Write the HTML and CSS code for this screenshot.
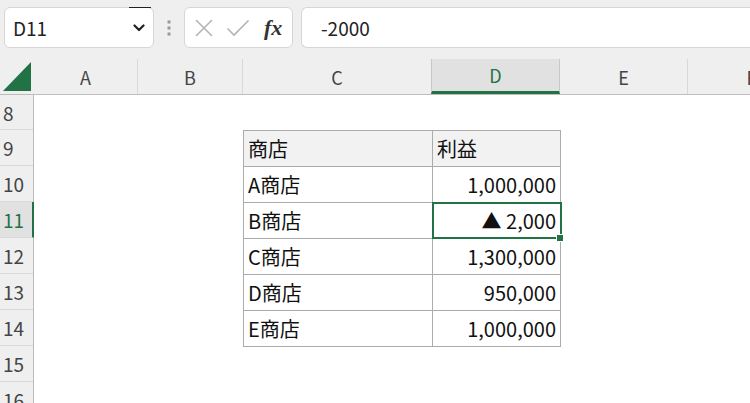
FILE: index.html
```html
<!DOCTYPE html>
<html lang="ja">
<head>
    <meta charset="UTF-8">
    <title>Book1 - Excel</title>
    <link rel="stylesheet" href="styles.css">
</head>
<body>

    <!-- Formula bar -->
    <div class="formula-bar">
        <div class="name-box">
            <span class="name">D11</span>
            <span class="caret-mark"></span>
            <svg class="chevron" width="12" height="8" viewBox="0 0 12 8">
                <path d="M1.5 1.5 L6 6 L10.5 1.5" fill="none" stroke="#222" stroke-width="2.2" stroke-linecap="round" stroke-linejoin="round"/>
            </svg>
        </div>
        <svg class="grip" width="4" height="16" viewBox="0 0 4 16">
            <rect x="0.5" y="0.5" width="3" height="3" fill="#9a9a9a"/>
            <rect x="0.5" y="6.5" width="3" height="3" fill="#9a9a9a"/>
            <rect x="0.5" y="12.5" width="3" height="3" fill="#9a9a9a"/>
        </svg>
        <div class="fx-box">
            <svg width="20" height="20" viewBox="0 0 20 20">
                <path d="M2 2 L18 18 M18 2 L2 18" stroke="#b4b4b4" stroke-width="1.6" fill="none"/>
            </svg>
            <svg width="24" height="20" viewBox="0 0 24 20">
                <path d="M1.5 10.5 L8 17 L22.5 2.5" stroke="#b4b4b4" stroke-width="1.6" fill="none"/>
            </svg>
            <span class="fx">fx</span>
        </div>
        <div class="formula-input">-2000</div>
    </div>

    <!-- Column headers -->
    <div class="col-headers">
        <div class="corner">
            <svg width="28" height="29" viewBox="0 0 28 29">
                <path d="M28 0 L28 29 L0 29 Z" fill="#217346"/>
            </svg>
        </div>
        <div class="col-head col-a">A</div>
        <div class="col-head col-b">B</div>
        <div class="col-head col-c">C</div>
        <div class="col-head col-d active">D</div>
        <div class="col-head col-e">E</div>
        <div class="col-head col-f">F</div>
    </div>

    <!-- Sheet -->
    <div class="sheet">
        <div class="row-heads">
            <div class="row-head first">8</div>
            <div class="row-head">9</div>
            <div class="row-head">10</div>
            <div class="row-head active">11</div>
            <div class="row-head">12</div>
            <div class="row-head">13</div>
            <div class="row-head">14</div>
            <div class="row-head">15</div>
            <div class="row-head">16</div>
        </div>
        <div class="cells">
            <table class="data">
                <tr class="head-row">
                    <td class="shop">商店</td>
                    <td class="profit-head">利益</td>
                </tr>
                <tr>
                    <td class="shop">A商店</td>
                    <td class="num">1,000,000</td>
                </tr>
                <tr>
                    <td class="shop">B商店</td>
                    <td class="num selected">▲ 2,000<span class="sel-frame"></span><span class="fill-handle"></span></td>
                </tr>
                <tr>
                    <td class="shop">C商店</td>
                    <td class="num">1,300,000</td>
                </tr>
                <tr>
                    <td class="shop">D商店</td>
                    <td class="num">950,000</td>
                </tr>
                <tr>
                    <td class="shop">E商店</td>
                    <td class="num">1,000,000</td>
                </tr>
            </table>
        </div>
    </div>

</body>
</html>
```

FILE: styles.css
```css
body {
    margin: 0;
    padding: 0;
    width: 750px;
    height: 403px;
    overflow: hidden;
    background-color: #fff;
    font-family: "Noto Sans CJK JP", "Noto Sans", sans-serif;
    color: #222;
}

/* Formula bar */
.formula-bar {
    display: flex;
    align-items: stretch;
    height: 48px;
    padding-top: 7px;
    padding-left: 4px;
    box-sizing: border-box;
    background-color: #efefef;
}

.name-box {
    position: relative;
    width: 150px;
    flex: none;
    box-sizing: border-box;
    display: flex;
    align-items: center;
    justify-content: space-between;
    padding: 0 8px 0 8px;
    background-color: #fff;
    border: 1px solid #d6d6d6;
    border-radius: 6px;
}

.name {
    font-size: 19px;
    color: #222;
}

.caret-mark {
    position: absolute;
    top: -1px;
    left: 124px;
    width: 22px;
    height: 1px;
    background-color: #222;
}

.grip {
    align-self: center;
    margin: 0 13px 0 13px;
}

.fx-box {
    width: 109px;
    flex: none;
    box-sizing: border-box;
    display: flex;
    align-items: center;
    gap: 12px;
    padding-left: 9px;
    background-color: #fff;
    border: 1px solid #d6d6d6;
    border-radius: 6px;
}

.fx {
    font-family: "Liberation Serif", serif;
    font-style: italic;
    font-weight: bold;
    font-size: 22px;
    color: #333;
    margin-left: 2px;
}

.formula-input {
    flex: 1;
    margin-left: 8px;
    display: flex;
    align-items: center;
    padding-left: 19px;
    font-size: 19px;
    color: #222;
    background-color: #fff;
    border: 1px solid #d6d6d6;
    border-right: none;
    border-radius: 6px 0 0 6px;
}

/* Column headers */
.col-headers {
    display: flex;
    height: 47px;
    padding-top: 11px;
    box-sizing: border-box;
    background-color: #efefef;
    border-bottom: 1px solid #bdbdbd;
}

.corner {
    width: 34px;
    flex: none;
    box-sizing: border-box;
    display: flex;
    align-items: flex-end;
    justify-content: flex-end;
    padding: 0 3px 3px 0;
}

.col-head {
    flex: none;
    box-sizing: border-box;
    display: flex;
    align-items: center;
    justify-content: center;
    border-right: 1px solid #d8d8d8;
    font-size: 18px;
    color: #444;
}

.col-a { width: 104px; }
.col-b { width: 105px; }
.col-c { width: 189px; }
.col-d { width: 128px; }
.col-e { width: 128px; }
.col-f { width: 128px; }

.col-head.active {
    background-color: #e1e1e1;
    color: #217346;
    border-left: 1px solid #c8c8c8;
    border-right: 1px solid #c8c8c8;
    border-bottom: 3px solid #217346;
    margin-left: -1px;
    width: 129px;
}

/* Sheet */
.sheet {
    display: flex;
}

.row-heads {
    width: 34px;
    flex: none;
    background-color: #efefef;
    border-right: 1px solid #bdbdbd;
    box-sizing: border-box;
}

.row-head {
    height: 36px;
    box-sizing: border-box;
    border-bottom: 1px solid #d8d8d8;
    display: flex;
    align-items: center;
    padding-left: 3px;
    font-size: 19px;
    color: #444;
}

.row-head.first {
    height: 35px;
}

.row-head.active {
    background-color: #e1e1e1;
    color: #217346;
    margin-right: -1px;
    border-right: 2px solid #217346;
}

.cells {
    flex: 1;
    padding-top: 35px;
    padding-left: 209px;
}

/* Data table */
.data {
    border-collapse: collapse;
    font-size: 20px;
    color: #111;
}

.data td {
    height: 36px;
    padding: 0 4px;
    border: 1px solid #ababab;
    box-sizing: border-box;
    vertical-align: middle;
    white-space: nowrap;
}

.data .shop {
    width: 189px;
}

.data .num,
.data .profit-head {
    width: 128px;
}

.data .num {
    text-align: right;
}

.head-row td {
    background-color: #f2f2f2;
}

.data .selected {
    position: relative;
}

.sel-frame {
    position: absolute;
    top: -1px;
    left: -1px;
    right: -2px;
    bottom: -1px;
    border: 2px solid #217346;
}

.fill-handle {
    position: absolute;
    right: -4px;
    bottom: -4px;
    width: 6px;
    height: 6px;
    background-color: #217346;
    border: 1px solid #fff;
}
```
